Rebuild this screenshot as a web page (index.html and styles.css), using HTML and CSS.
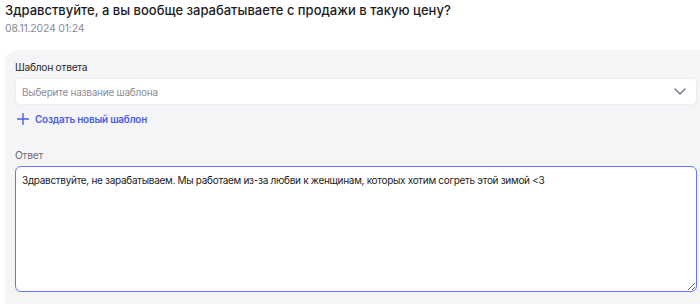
FILE: index.html
```html
<!DOCTYPE html>
<html lang="ru">
<head>
  <meta charset="UTF-8">
  <title>Ответ на вопрос</title>
  <link rel="stylesheet" href="styles.css">
</head>
<body>
  <div class="question">
    <div class="question-text">Здравствуйте, а вы вообще зарабатываете с продажи в такую цену?</div>
    <div class="question-date">08.11.2024 01:24</div>
  </div>

  <div class="answer-panel">
    <div class="field">
      <div class="field-label">Шаблон ответа</div>
      <div class="select">
        <span class="select-placeholder">Выберите название шаблона</span>
        <svg class="chevron" width="12" height="7" viewBox="0 0 12 7" fill="none">
          <path d="M1 1l5 5 5-5" stroke="#6e6e82" stroke-width="1.3" stroke-linecap="round" stroke-linejoin="round"/>
        </svg>
      </div>
      <a class="new-template" href="#">
        <svg width="12" height="12" viewBox="0 0 12 12" fill="none">
          <path d="M6 0.5v11M0.5 6h11" stroke="#4a5ee8" stroke-width="1.4" stroke-linecap="round"/>
        </svg>
        Создать новый шаблон
      </a>
    </div>

    <div class="field">
      <div class="field-label muted">Ответ</div>
      <textarea class="answer">Здравствуйте, не зарабатываем. Мы работаем из-за любви к женщинам, которых хотим согреть этой зимой &lt;3</textarea>
    </div>
  </div>
</body>
</html>
```

FILE: styles.css
```css
body {
  margin: 0;
  padding: 2px 0 0 5px;
  font-family: Inter, "Noto Sans", sans-serif;
  background: #fff;
  color: #1c1c1e;
  overflow: hidden;
}
.question-text {
  font-size: 13px;
  line-height: 16px;
  font-weight: 500;
}
.question-date {
  margin-top: 4px;
  font-size: 10.5px;
  line-height: 14px;
  letter-spacing: -0.2px;
  color: #8b8b90;
}
.answer-panel {
  margin-top: 14px;
  background: #f5f5f7;
  border-radius: 12px 0 0 0;
  padding: 10px 3px 14px 10px;
  display: flex;
  flex-direction: column;
  gap: 22px;
}
.field {
  display: flex;
  flex-direction: column;
}
.field-label {
  font-size: 10.2px;
  line-height: 14px;
  letter-spacing: -0.25px;
  color: #2a2a2e;
  margin-bottom: 4px;
}
.field-label.muted {
  color: #6b6b72;
}
.select {
  height: 27px;
  background: #fff;
  border: 1px solid #eeeef2;
  border-radius: 5px;
  box-sizing: border-box;
  display: flex;
  align-items: center;
  justify-content: space-between;
  padding: 0 10px 0 6px;
}
.select-placeholder {
  font-size: 10px;
  letter-spacing: -0.25px;
  color: #8d8d96;
}
.new-template {
  margin-top: 7px;
  display: flex;
  align-items: center;
  gap: 6px;
  padding-left: 2px;
  font-size: 10px;
  line-height: 14px;
  letter-spacing: -0.25px;
  font-weight: 600;
  color: #4a5ee8;
  text-decoration: none;
}
.answer {
  height: 126px;
  box-sizing: border-box;
  border: 1.5px solid #6477f2;
  border-radius: 6px;
  padding: 6px 6px;
  font-family: Inter, "Noto Sans", sans-serif;
  font-size: 10px;
  line-height: 14px;
  letter-spacing: -0.3px;
  color: #1c1c1e;
  background: #fff;
  outline: none;
  resize: vertical;
}
```
